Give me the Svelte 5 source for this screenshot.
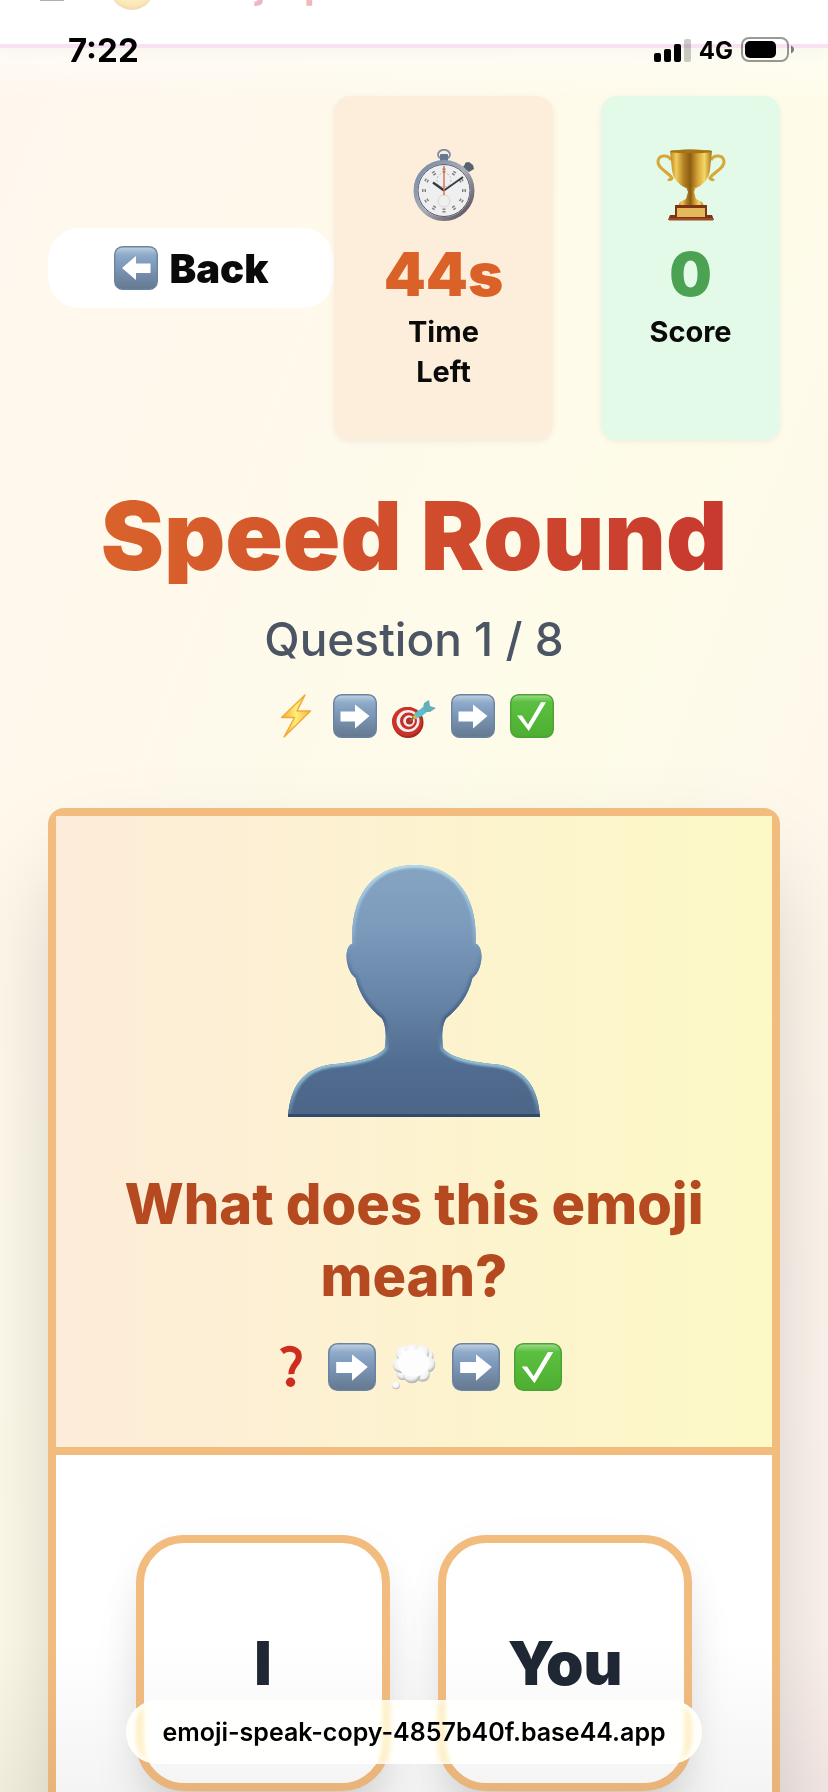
<script>
    let time = $state("7:22");
    let secondsLeft = $state(44);
    let score = $state(0);
    let question = $state(1);
    let selected = $state(null);

    const total = 8;
    const options = ["I", "You"];
    const ticks = Array.from({ length: 12 }, (_, i) => i * 30);
</script>

<!-- Shared gradients for the icons -->
<svg class="defs" width="0" height="0" aria-hidden="true">
    <defs>
        <linearGradient id="tile" x1="0" y1="0" x2="0" y2="1">
            <stop offset="0" stop-color="#c3d3e2" />
            <stop offset="0.18" stop-color="#8fabc9" />
            <stop offset="0.35" stop-color="#829fc1" />
            <stop offset="1" stop-color="#64788f" />
        </linearGradient>
        <linearGradient id="tileGreen" x1="0" y1="0" x2="0" y2="1">
            <stop offset="0" stop-color="#a4dc90" />
            <stop offset="0.17" stop-color="#5bc03f" />
            <stop offset="1" stop-color="#4eae31" />
        </linearGradient>
        <linearGradient id="person" x1="0" y1="0" x2="0" y2="1">
            <stop offset="0" stop-color="#86a4c2" />
            <stop offset="0.25" stop-color="#7c9abb" />
            <stop offset="0.55" stop-color="#6583a5" />
            <stop offset="0.8" stop-color="#506c90" />
            <stop offset="1" stop-color="#4c6587" />
        </linearGradient>
        <linearGradient id="personEdge" x1="0" y1="0" x2="0" y2="1">
            <stop offset="0" stop-color="#b5dcec" />
            <stop offset="0.28" stop-color="#84a9c8" />
            <stop offset="0.4" stop-color="#5f7fa6" />
            <stop offset="0.6" stop-color="#476186" />
            <stop offset="0.7" stop-color="#5f85a8" />
            <stop offset="0.77" stop-color="#93c3da" />
            <stop offset="0.86" stop-color="#86b3cf" />
            <stop offset="1" stop-color="#4f6d92" />
        </linearGradient>
        <linearGradient id="gold" x1="0" y1="0" x2="1" y2="0">
            <stop offset="0" stop-color="#b98520" />
            <stop offset="0.15" stop-color="#f3cc58" />
            <stop offset="0.32" stop-color="#b48325" />
            <stop offset="0.48" stop-color="#8a5c12" />
            <stop offset="0.65" stop-color="#d3a034" />
            <stop offset="0.82" stop-color="#f5d768" />
            <stop offset="1" stop-color="#a87418" />
        </linearGradient>
        <linearGradient id="rim" x1="0" y1="0" x2="1" y2="1">
            <stop offset="0" stop-color="#6f87a8" />
            <stop offset="0.5" stop-color="#a9adb5" />
            <stop offset="1" stop-color="#4d4450" />
        </linearGradient>
        <linearGradient id="bolt" x1="0" y1="0" x2="1" y2="0">
            <stop offset="0" stop-color="#f6a62f" />
            <stop offset="0.5" stop-color="#fdf07a" />
            <stop offset="1" stop-color="#f6b23a" />
        </linearGradient>
        <radialGradient id="puff" cx="0.45" cy="0.35" r="0.6">
            <stop offset="0" stop-color="#ffffff" />
            <stop offset="0.7" stop-color="#f1f1f1" />
            <stop offset="1" stop-color="#b4b4b4" />
        </radialGradient>
        <radialGradient id="face" cx="0.5" cy="0.4" r="0.6">
            <stop offset="0" stop-color="#ffe680" />
            <stop offset="0.8" stop-color="#f7c33f" />
            <stop offset="1" stop-color="#dc9b2c" />
        </radialGradient>
    </defs>
</svg>

{#snippet arrow(left)}
    <svg class="icon" viewBox="0 0 44 44" aria-hidden="true">
        <rect x="0.7" y="0.7" width="42.6" height="42.6" rx="8" fill="url(#tile)" stroke="#6b83a0" stroke-width="1.4" />
        {#if left}
            <path fill="#fff" d="M8 22 22 10v7.500h14.500v9.500H22V34Z" />
        {:else}
            <path fill="#fff" d="M36.500 22 22 10.500v7H7.500v10H22v7Z" />
        {/if}
    </svg>
{/snippet}

{#snippet check()}
    <svg class="icon" viewBox="0 0 44 44" aria-hidden="true">
        <rect x="0.7" y="0.7" width="42.600" height="42.600" rx="8" fill="url(#tileGreen)" stroke="#4da235" stroke-width="1.400" />
        <path fill="#fff" d="M7 21.500h5l6 9L31 8.300h5L18.800 37Z" />
    </svg>
{/snippet}

<div class="screen">
    <div class="status-bar">
        <span class="clock">{time}</span>
        <div class="status-icons">
            <svg width="37" height="24" viewBox="0 0 37 24" aria-hidden="true">
                <rect x="0" y="15" width="7" height="9" rx="2" />
                <rect x="10" y="11" width="7" height="13" rx="2" />
                <rect x="20" y="6" width="7" height="18" rx="2" />
                <rect x="30" y="1" width="7" height="23" rx="2" opacity="0.2" />
            </svg>
            <span class="network">4G</span>
            <svg width="53" height="26" viewBox="0 0 53 26" aria-hidden="true">
                <rect x="1" y="1" width="46" height="23" rx="7" fill="none" stroke="#000" stroke-opacity="0.4" stroke-width="2" />
                <rect x="4" y="4" width="31" height="17" rx="5" />
                <path d="M50 8.500c4 1.500 4 6.500 0 8Z" fill-opacity="0.5" />
            </svg>
        </div>
    </div>

    <header class="app-header">
        <button class="menu" aria-label="Menu">
            <svg width="24" height="28" viewBox="0 0 24 28" aria-hidden="true">
                <path d="M1 2h22M1 14h22M1 25h22" stroke="#222" stroke-width="4" stroke-linecap="round" />
            </svg>
        </button>
        <svg width="44" height="44" viewBox="0 0 48 48" aria-hidden="true">
            <circle cx="24" cy="24" r="24" fill="url(#face)" />
        </svg>
        <span class="brand">Emoji Speak</span>
    </header>

    <main>
        <div class="top-row">
            <button class="back">
                {@render arrow(true)}
                Back
            </button>
            <div class="stats">
                <div class="stat time-left">
                    <svg class="stat-icon" viewBox="0 0 72 72" aria-hidden="true">
                        <ellipse cx="36" cy="5.500" rx="6" ry="4.700" fill="none" stroke="#7d8da5" stroke-width="1.800" />
                        <rect x="32" y="5" width="8" height="8" rx="1" fill="#66788f" />
                        <path d="m56 19 4-5" stroke="#5c6675" stroke-width="3" />
                        <path d="m57 14 4-1 4 3 1 4-5 3-4-3Z" fill="#566373" />
                        <circle cx="36" cy="41.500" r="28.500" fill="#efefef" stroke="url(#rim)" stroke-width="4" />
                        <circle cx="36" cy="41.500" r="26" fill="none" stroke="#55596a" stroke-width="1" />
                        <circle cx="36" cy="31" r="7" fill="none" stroke="#bbb" stroke-width="1" stroke-dasharray="2 2" />
                        <circle cx="36" cy="52" r="6" fill="none" stroke="#d5d5d5" stroke-width="1" />
                        {#each ticks as angle}
                            <path d="M36 19.500v4" stroke="#858585" stroke-width="3" stroke-dasharray="1.500 1" transform="rotate({angle} 36 41.500)" />
                        {/each}
                        <path d="M36 41.500 25 33.500" stroke="#333a42" stroke-width="2.400" />
                        <path d="m36 41.500 19-13.500" stroke="#333a42" stroke-width="1.800" />
                        <path d="M36 46V17" stroke="#e06648" stroke-width="1.400" />
                    </svg>
                    <span class="value">{secondsLeft}s</span>
                    <span class="label">Time Left</span>
                </div>
                <div class="stat score">
                    <svg class="stat-icon" viewBox="0 0 72 72" aria-hidden="true">
                        <path d="M16 11c-3-6-12-5-13 1-1 7 9 10 14 17-1 2-3 2-4 1" fill="none" stroke="#d7a738" stroke-width="3" />
                        <path d="M56 11c3-6 12-5 13 1 1 7-9 10-14 17 1 2 3 2 4 1" fill="none" stroke="#d7a738" stroke-width="3" />
                        <path d="M15 2c2-2 40-2 42 0l-2 19c-1 9-7 15-14 18H31c-7-3-13-9-14-18Z" fill="url(#gold)" />
                        <ellipse cx="36" cy="2.500" rx="21" ry="1.800" fill="#a67418" />
                        <path d="M31 38h10l-2 5 2 7 6 3 2 4H23l2-4 6-3 2-7Z" fill="url(#gold)" />
                        <path d="M20 56h32v10h5l2 5H13l2-5h5Z" fill="#7c3414" />
                        <path d="M14 69h44v2.500H14Z" fill="#9c4a26" />
                        <path d="M22 59h28v9H22Z" fill="#e4b95c" />
                    </svg>
                    <span class="value">{score}</span>
                    <span class="label">Score</span>
                </div>
            </div>
        </div>

        <h1>Speed Round</h1>
        <p class="progress">Question {question} / {total}</p>
        <div class="steps">
            <svg class="icon" viewBox="0 0 44 44" aria-hidden="true">
                <path d="M31 1 7.500 23.500h13L10 43l26.500-26H23Z" fill="url(#bolt)" stroke="#f2a93a" stroke-width="1.400" stroke-linejoin="round" />
            </svg>
            {@render arrow(false)}
            <svg class="icon" viewBox="0 0 44 44" aria-hidden="true">
                <ellipse cx="16" cy="28.500" rx="15.500" ry="15.500" fill="#a82620" />
                <ellipse cx="15" cy="27.500" rx="15" ry="14.500" fill="#cb3329" />
                <ellipse cx="16" cy="27" rx="11.500" ry="11" fill="#f6eeee" />
                <ellipse cx="16.500" cy="27" rx="8.500" ry="8.500" fill="#c62f27" />
                <ellipse cx="17" cy="27" rx="5.800" ry="5.800" fill="#f6eeee" />
                <ellipse cx="17.500" cy="27" rx="3.500" ry="3.500" fill="#b52b24" />
                <path d="m18 27 5-5" stroke="#8b6b2b" stroke-width="2" />
                <path d="m22 20 9-7 5 4-6 5-7 3Z" fill="#5bbfd0" />
                <path d="m31 14 1-5 5-3 1 6 6 2-6 4-5 0Z" fill="#67aebb" />
                <path d="m21 22 3-1 1 3-3 1Z" fill="#d7bd3b" />
            </svg>
            {@render arrow(false)}
            {@render check()}
        </div>

        <section class="card">
            <div class="prompt">
                <svg class="person" viewBox="0 0 250 250" aria-hidden="true">
                    <clipPath id="bust">
                        <path d="M125 0C88 0 61 27 64 78c-6 2-7 13-5 20 1 6 4 11 8 14 4 18 15 31 26 40 4 6 5 19 3 30-8 9-25 13-54 16C15 202 2 220 0 250h250c-2-30-15-48-42-52-29-3-46-7-54-16-2-11-1-24 3-30 11-9 22-22 26-40 4-3 7-8 8-14 2-7 1-18-5-20C189 27 162 0 125 0Z" />
                    </clipPath>
                    <g clip-path="url(#bust)">
                        <rect width="250" height="250" fill="url(#person)" />
                        <path class="edge" fill="none" stroke="url(#personEdge)" stroke-width="6" d="M125 0C88 0 61 27 64 78c-6 2-7 13-5 20 1 6 4 11 8 14 4 18 15 31 26 40 4 6 5 19 3 30-8 9-25 13-54 16C15 202 2 220 0 250h250c-2-30-15-48-42-52-29-3-46-7-54-16-2-11-1-24 3-30 11-9 22-22 26-40 4-3 7-8 8-14 2-7 1-18-5-20C189 27 162 0 125 0Z" />
                        <rect y="247" width="250" height="3" fill="#2f4a6d" />
                    </g>
                </svg>
                <h2>What does this emoji mean?</h2>
                <div class="steps large">
                    <svg class="icon" viewBox="0 0 44 44" aria-hidden="true">
                        <path d="M14.500 8c7-5.500 16-2 15.500 5-.3 6-7 7.500-6.700 15.500" fill="none" stroke="#ce2c1e" stroke-width="5.500" />
                        <circle cx="22.500" cy="36" r="4.300" fill="#ce2c1e" />
                    </svg>
                    {@render arrow(false)}
                    <svg class="icon" viewBox="0 0 44 44" aria-hidden="true">
                        <circle cx="34" cy="12" r="6" fill="url(#puff)" />
                        <circle cx="12" cy="28" r="6" fill="url(#puff)" />
                        <circle cx="10" cy="20" r="7.500" fill="url(#puff)" />
                        <circle cx="13" cy="10" r="7.500" fill="url(#puff)" />
                        <circle cx="20" cy="7" r="6" fill="url(#puff)" />
                        <circle cx="29" cy="9" r="7" fill="url(#puff)" />
                        <circle cx="34" cy="20" r="7.500" fill="url(#puff)" />
                        <circle cx="30" cy="29" r="6.500" fill="url(#puff)" />
                        <circle cx="20" cy="29" r="8" fill="url(#puff)" />
                        <ellipse cx="21.500" cy="18.500" rx="14.500" ry="12.500" fill="#fdfdfd" />
                        <circle cx="5.500" cy="39" r="3.500" fill="url(#puff)" />
                    </svg>
                    {@render arrow(false)}
                    {@render check()}
                </div>
            </div>
            <div class="options">
                {#each options as option}
                    <button class="option" onclick={() => (selected = option)}>{option}</button>
                {/each}
            </div>
        </section>
    </main>

    <div class="browser-bar">
        <a class="url" href="https://emoji-speak-copy-4857b40f.base44.app">emoji-speak-copy-4857b40f.base44.app</a>
    </div>
</div>

<style>
    :global(body) {
        margin: 0;
    }

    .screen {
        position: relative;
        height: 100vh;
        overflow: hidden;
        background: linear-gradient(to bottom right, #fff7ee, #fefce9 52%, #fdf0f0);
        background-size: 100% 120%;
        font-family: Inter, "Liberation Sans", sans-serif;
        color: #0a0a0a;
    }

    .screen * {
        box-sizing: border-box;
    }

    button {
        font-family: inherit;
        color: inherit;
        cursor: pointer;
    }

    .defs {
        position: absolute;
    }

    /* Phone status bar, lies over the page */
    .status-bar {
        position: absolute;
        z-index: 2;
        top: 0;
        left: 0;
        right: 0;
        height: 100px;
        padding: 0 34px 0 68px;
        display: flex;
        align-items: center;
        justify-content: space-between;
        background: linear-gradient(rgba(255, 255, 255, 0.64), rgba(255, 255, 255, 0.5) 48%, rgba(255, 255, 255, 0));
        color: #000;
    }

    .clock {
        font-size: 33px;
        font-weight: 700;
    }

    .status-icons {
        display: flex;
        align-items: center;
        gap: 8px;
    }

    .network {
        font-size: 24px;
        font-weight: 700;
    }

    /* Page header, scrolled mostly out of view */
    .app-header {
        display: flex;
        align-items: center;
        height: 116px;
        margin-top: -68px;
        padding: 0 40px;
        background: #fff;
        border-bottom: 4px solid #f1c4e3;
        box-shadow: 0 4px 12px rgba(0, 0, 0, 0.06);
    }

    .menu {
        display: flex;
        margin-right: 46px;
        padding: 0;
        border: 0;
        background: none;
    }

    .brand {
        margin: 0 0 4px 28px;
        font-size: 34px;
        font-weight: 800;
        background: linear-gradient(to right, #c33aa0, #d34030 70%);
        background-clip: text;
        color: transparent;
    }

    main {
        padding: 48px;
    }

    .top-row {
        display: grid;
        grid-template-columns: 286fr 446fr;
        align-items: center;
    }

    .back {
        display: flex;
        align-items: center;
        justify-content: center;
        gap: 12px;
        height: 80px;
        border: 0;
        border-radius: 32px;
        background: #fff;
        font-size: 40px;
        font-weight: 900;
    }

    .stats {
        display: grid;
        grid-template-columns: 219fr 179fr;
        gap: 48px;
    }

    .stat {
        display: flex;
        flex-direction: column;
        align-items: center;
        padding: 48px;
        border-radius: 16px;
        box-shadow: 0 2px 6px rgba(0, 0, 0, 0.06);
        text-align: center;
    }

    .time-left {
        background: #fdeedb;
    }

    .score {
        background: #e2fae7;
    }

    .stat-icon {
        width: 72px;
        height: 72px;
        margin: 5px 0 17px;
    }

    .value {
        margin-bottom: 2px;
        font-size: 60px;
        font-weight: 900;
        line-height: 72px;
        color: #da6229;
    }

    .score .value {
        color: #4ca253;
    }

    .label {
        width: min-content;
        font-size: 29px;
        font-weight: 700;
        line-height: 40px;
    }

    h1 {
        margin: 48px 0 0;
        font-size: 95px;
        font-weight: 900;
        line-height: 96px;
        text-align: center;
        background: linear-gradient(to right, #db662a, #c6352f);
        background-clip: text;
        color: transparent;
    }

    .progress {
        margin: 27px 0;
        font-size: 46px;
        font-weight: 500;
        line-height: 56px;
        text-align: center;
        color: #4c5563;
    }

    .steps {
        display: flex;
        justify-content: center;
        gap: 15px;
    }

    .icon {
        width: 44px;
        height: 44px;
    }

    .large {
        gap: 14px;
    }

    .large .icon {
        width: 48px;
        height: 48px;
    }

    .card {
        margin-top: 70px;
        border: 8px solid #f3bc7f;
        border-radius: 16px;
        background: #fff;
        box-shadow: 0 50px 100px -24px rgba(0, 0, 0, 0.25);
    }

    .prompt {
        display: flex;
        flex-direction: column;
        align-items: center;
        padding: 49px 48px 56px;
        border-bottom: 8px solid #f3bc7f;
        background: linear-gradient(to right, #fdecd9, #fcf9c6);
    }

    .person {
        width: 252px;
        height: 252px;
    }

    .edge {
        filter: blur(1px);
    }

    h2 {
        margin: 51px 0 31px;
        font-size: 56px;
        font-weight: 800;
        line-height: 72px;
        text-align: center;
        color: #b54a20;
    }

    .options {
        display: grid;
        grid-template-columns: 1fr 1fr;
        gap: 48px;
        padding: 80px;
    }

    .option {
        height: 256px;
        border: 8px solid #f3bc7f;
        border-radius: 48px;
        background: #fff;
        box-shadow: 0 40px 60px -20px rgba(0, 0, 0, 0.2), 0 8px 40px rgba(0, 0, 0, 0.04);
        font-size: 60px;
        font-weight: 900;
        color: #1f2735;
    }

    /* Browser address pill, lies over the bottom of the page */
    .browser-bar {
        position: absolute;
        left: 0;
        right: 0;
        bottom: 0;
        display: flex;
        justify-content: center;
        padding: 60px 0 28px;
        background: linear-gradient(rgba(0, 0, 0, 0), rgba(0, 0, 0, 0.045));
    }

    .url {
        display: flex;
        align-items: center;
        height: 64px;
        padding: 0 36px;
        border-radius: 32px;
        background: rgba(255, 255, 252, 0.68);
        backdrop-filter: blur(3px) brightness(1.1) saturate(2);
        box-shadow: inset 6px 0 4px #fffffa, inset -6px 0 4px #fffffa;
        font-size: 25px;
        font-weight: 600;
        color: #000;
        text-decoration: none;
    }
</style>
